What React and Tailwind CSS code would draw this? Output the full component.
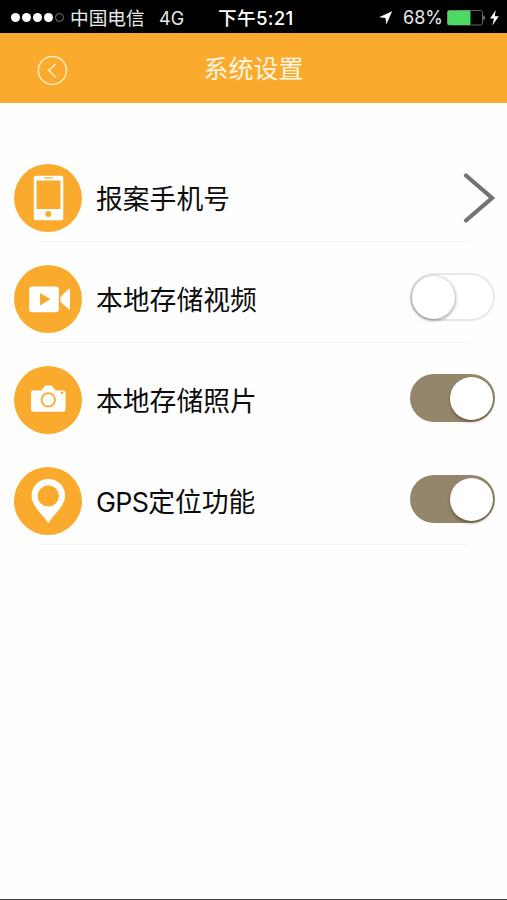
import { useState } from 'react';

function PhoneIcon() {
  return (
    <svg viewBox="0 0 68 68" className="size-[68px]">
      <rect x="19.8" y="11.7" width="29.5" height="44.5" rx="2" fill="#fff" />
      <rect x="22.5" y="16.5" width="24" height="28.5" fill="#faab2d" />
      <rect x="30" y="13" width="9" height="1.8" rx="0.9" fill="#fbc672" />
      <circle cx="34.3" cy="50" r="3" fill="#faab2d" />
    </svg>
  );
}

function VideoIcon() {
  return (
    <svg viewBox="0 0 68 68" className="size-[68px]">
      <rect x="15.2" y="21.4" width="29.6" height="25.8" rx="3" fill="#fff" />
      <path d="M26 28V40.5L36.5 34.2Z" fill="#faab2d" />
      <path d="M46.5 32L54.5 24Q56 23 56 24.7V43.3Q56 45.2 54.5 44L46.5 37Z" fill="#fff" />
    </svg>
  );
}

function CameraIcon() {
  return (
    <svg viewBox="0 0 68 68" className="size-[68px]">
      <path d="M19 24.5H27.5L30.5 20.5Q31.3 19.5 32.5 19.5H36.5Q37.8 19.5 38.6 20.5L41.5 24.5H49Q51.5 24.5 51.5 27V43.5Q51.5 45.7 49 45.7H19.5Q17 45.7 17 43.5V26.5Q17 24.5 19 24.5Z" fill="#fff" />
      <circle cx="34.3" cy="33.8" r="6.7" fill="none" stroke="#faab2d" strokeWidth="1.8" />
      <circle cx="48" cy="26.8" r="1.3" fill="#faab2d" />
    </svg>
  );
}

function PinIcon() {
  return (
    <svg viewBox="0 0 68 68" className="size-[68px]">
      <path d="M34.3 56.3C31 49.5 17.5 40 17.5 28.5A16.8 16.5 0 0 1 51.1 28.5C51.1 40 37.5 49.5 34.3 56.3Z" fill="#fff" />
      <circle cx="34.3" cy="29" r="10.6" fill="#faab2d" />
    </svg>
  );
}

function Toggle({ on, onChange, label }) {
  return (
    <button
      type="button"
      role="switch"
      aria-checked={on}
      aria-label={label}
      onClick={onChange}
      className={`mb-[3px] flex h-12 w-[85px] items-center rounded-full ${on ? 'justify-end bg-[#94866a] pr-[2px]' : 'justify-start border-2 border-[#e8e8e8] bg-white'}`}
    >
      <span className={`size-[43px] rounded-full bg-white ${on ? 'shadow-[0_2px_3px_rgba(50,35,10,0.45)]' : 'shadow-[0_1px_3px_1px_rgba(0,0,0,0.32)]'}`} />
    </button>
  );
}

function StatusBar() {
  return (
    <div className="flex h-[33px] items-center bg-black pt-[3px] pl-[11px] text-[18.7px] leading-none whitespace-nowrap text-[#e8e8e8]">
      <div className="mb-[2px] flex w-[59px] gap-[2px]">
        <span className="size-[9px] rounded-full bg-white" />
        <span className="size-[9px] rounded-full bg-white" />
        <span className="size-[9px] rounded-full bg-white" />
        <span className="size-[9px] rounded-full bg-white" />
        <span className="size-[9px] rounded-full border border-[#777]" />
      </div>
      <span className="w-[89px] pt-[2px]">中国电信</span>
      <span className="w-[59px] pt-[2px] text-[18px]">4G</span>
      <span className="w-[160px] pt-[2px] font-medium tracking-[0.3px] text-white">下午5:21</span>
      <svg viewBox="0 0 14 14" className="mr-[10px] h-[14px] w-[15px]">
        <path d="M13.7 0.3L7.8 13.5L7 7L0.5 6.3Z" fill="#fff" />
      </svg>
      <span className="w-11 text-[18px]">68%</span>
      <svg viewBox="0 0 54 18" className="h-[18px] w-[54px]">
        <rect x="0.5" y="1.5" width="35" height="14.5" rx="2" fill="none" stroke="#666" />
        <rect x="0.5" y="1.5" width="23" height="14.5" rx="1" fill="#4cd964" />
        <path d="M36.5 6Q39 8.7 36.5 11.5Z" fill="#bbb" />
        <path d="M48.8 1L43 9.5H47L45.3 16.5L51.8 7.3H47.7Z" fill="#fff" />
      </svg>
    </div>
  );
}

function Row({ icon, label, line, children }) {
  return (
    <li className="flex h-[101px] flex-col pt-[22.5px]">
      <div className="flex h-[68px] items-center pr-3 pl-[14px]">
        <span className="size-[68px] shrink-0 rounded-full bg-[#faab2d]">{icon}</span>
        <span className="ml-[14px] flex-1 pt-[3px] text-[26.8px] leading-none">{label}</span>
        {children}
      </div>
      <div className={`mt-[9.5px] mr-[39px] ml-10 h-px ${line ? 'bg-[#f4f4f4]' : 'bg-transparent'}`} />
    </li>
  );
}

export default function App() {
  const [video, setVideo] = useState(false);
  const [photo, setPhoto] = useState(true);
  const [gps, setGps] = useState(true);

  return (
    <div className="flex h-[900px] w-[507px] flex-col overflow-hidden border-b border-[#444] bg-[#fefefe] font-[Inter,'Noto_Sans_CJK_SC',sans-serif] text-[#0c0c0c]">
      <StatusBar />
      <header className="grid h-[70px] grid-cols-[1fr_auto_1fr] items-center bg-[#faab2d] text-[#fff6e0]">
        <button type="button" aria-label="返回" className="ml-[37px] w-[31px] pt-1">
          <svg viewBox="0 0 31 31" className="size-[31px]" fill="none" stroke="#ffedc0" strokeWidth="1.5" strokeLinecap="round">
            <circle cx="15.4" cy="15.4" r="14" />
            <path d="M18.2 9.2L11.8 15.5L18.2 21.8" />
          </svg>
        </button>
        <h1 className="pt-[2px] text-[25px] leading-none">系统设置</h1>
      </header>

      <ul className="mt-[38px]">
        <Row icon={<PhoneIcon />} label="报案手机号" line>
          <svg viewBox="0 0 32 50" className="h-[50px] w-8" fill="none" stroke="#747474" strokeWidth="4.2" strokeLinecap="round">
            <path d="M3 2.5L29 25L3 47.5" />
          </svg>
        </Row>
        <Row icon={<VideoIcon />} label="本地存储视频" line>
          <Toggle on={video} onChange={() => setVideo(!video)} label="本地存储视频" />
        </Row>
        <Row icon={<CameraIcon />} label="本地存储照片">
          <Toggle on={photo} onChange={() => setPhoto(!photo)} label="本地存储照片" />
        </Row>
        <Row icon={<PinIcon />} label={<><span className="tracking-[-0.7px]">GPS</span>定位功能</>} line>
          <Toggle on={gps} onChange={() => setGps(!gps)} label="GPS定位功能" />
        </Row>
      </ul>
    </div>
  );
}
